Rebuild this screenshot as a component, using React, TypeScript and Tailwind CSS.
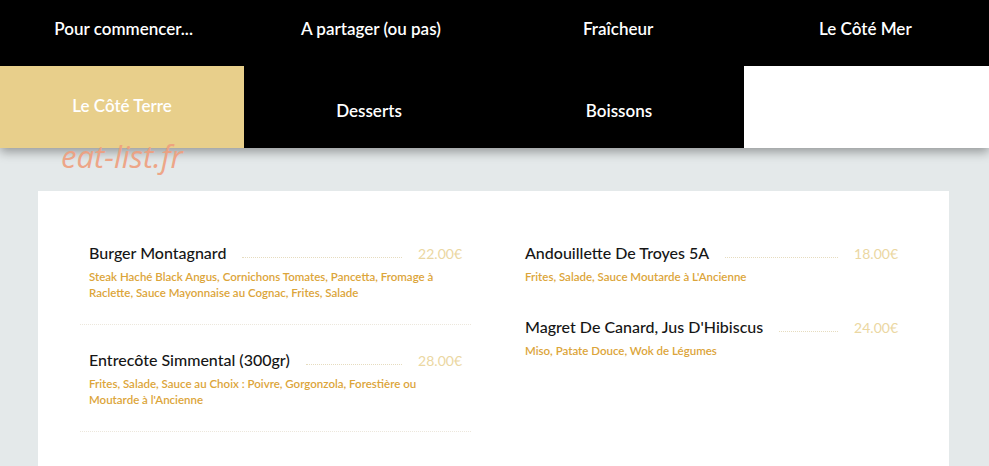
import React from "react"

type Dish = {
  name: string
  price: string
  desc: string[]
  sep?: boolean
}

const leftDishes: Dish[] = [
  {
    name: "Burger Montagnard",
    price: "22.00€",
    desc: [
      "Steak Haché Black Angus, Cornichons Tomates, Pancetta, Fromage à",
      "Raclette, Sauce Mayonnaise au Cognac, Frites, Salade",
    ],
    sep: true,
  },
  {
    name: "Entrecôte Simmental (300gr)",
    price: "28.00€",
    desc: [
      "Frites, Salade, Sauce au Choix : Poivre, Gorgonzola, Forestière ou",
      "Moutarde à l'Ancienne",
    ],
    sep: true,
  },
]

const rightDishes: Dish[] = [
  {
    name: "Andouillette De Troyes 5A",
    price: "18.00€",
    desc: ["Frites, Salade, Sauce Moutarde à L'Ancienne"],
  },
  {
    name: "Magret De Canard, Jus D'Hibiscus",
    price: "24.00€",
    desc: ["Miso, Patate Douce, Wok de Légumes"],
  },
]

function DishRow({ dish }: { dish: Dish }) {
  return (
    <div className={dish.sep ? "border-b border-dotted border-[#ece7dc] pb-[23px] mb-[25px]" : "mb-[32px]"}>
      <div className="px-[9px]">
        <div className="flex items-center h-[20px]">
          <span className="text-[16px] font-medium text-[#161616] whitespace-nowrap">{dish.name}</span>
          <span className="flex-1 mx-[16px] mt-[8px] border-b border-dotted border-[#e6dcbf]"></span>
          <span className="text-[14px] text-[#ebd7a2] whitespace-nowrap">{dish.price}</span>
        </div>
        <div className="mt-[6px] text-[11.5px] leading-[16px] font-semibold text-[#dca53a]">
          {dish.desc.map((line, i) => (
            <div key={i}>{line}</div>
          ))}
        </div>
      </div>
    </div>
  )
}

export default function App() {
  const topItems = ["Pour commencer...", "A partager (ou pas)", "Fraîcheur", "Le Côté Mer"]

  return (
    <div
      className="relative w-[989px] h-[466px] overflow-hidden bg-[#e4e9ea]"
      style={{ fontFamily: "Lato, 'Noto Sans', sans-serif" }}
    >
      <nav className="relative z-10 shadow-[0_4px_10px_rgba(0,0,0,0.35)]">
        <div className="grid grid-cols-4 h-[66px] bg-black">
          {topItems.map((t) => (
            <div key={t} className="flex items-center justify-center pb-[8px] text-white text-[17px] font-semibold">
              {t}
            </div>
          ))}
        </div>
        <div className="grid grid-cols-[244px_250px_250px_245px] h-[82px]">
          <div className="flex items-center justify-center pb-[2px] bg-[#e8cf8b] text-white text-[17px] font-semibold">
            Le Côté Terre
          </div>
          <div className="flex items-center justify-center pt-[8px] bg-black text-white text-[17px] font-semibold">
            Desserts
          </div>
          <div className="flex items-center justify-center pt-[8px] bg-black text-white text-[17px] font-semibold">
            Boissons
          </div>
          <div className="bg-white"></div>
        </div>
      </nav>

      <div
        className="absolute z-20 left-[61px] top-[133px] text-[31px] italic text-[#ef9f7e] opacity-90"
        style={{ fontFamily: "'Open Sans', sans-serif" }}
      >
        eat-list.fr
      </div>

      <div className="mt-[43px] ml-[38px] mr-[40px] h-[300px] bg-white pt-[52px] px-[42px]">
        <div className="grid grid-cols-2 gap-x-[45px]">
          <div>
            {leftDishes.map((d) => (
              <DishRow key={d.name} dish={d} />
            ))}
          </div>
          <div>
            {rightDishes.map((d) => (
              <DishRow key={d.name} dish={d} />
            ))}
          </div>
        </div>
      </div>
    </div>
  )
}
